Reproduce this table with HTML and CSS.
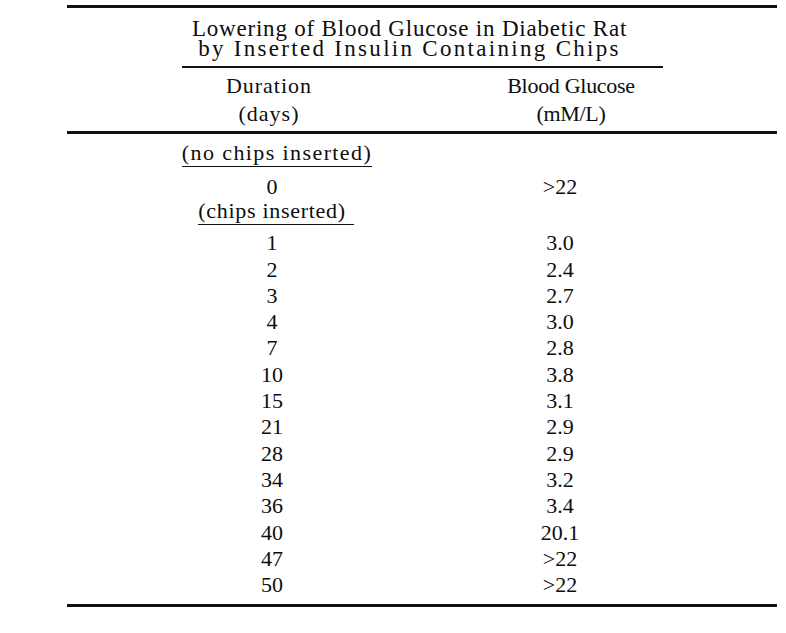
FILE: index.html
```html
<!DOCTYPE html>
<html>
<head>
<meta charset="utf-8">
<link rel="stylesheet" href="styles.css">
</head>
<body>
<div class="table">
  <div class="title">
    <div class="title-line t1">Lowering of Blood Glucose in Diabetic Rat</div>
    <div class="title-line t2">by Inserted Insulin Containing Chips</div>
  </div>
  <div class="head">
    <div class="hcell h1"><div>Duration</div><div>(days)</div></div>
    <div class="hcell h2"><div>Blood Glucose</div><div>(mM/L)</div></div>
  </div>
  <div class="body">
    <div class="label first"><span class="ul ul-a">(no chips inserted)</span></div>
    <div class="row"><span class="c1">0</span><span class="c2">&gt;22</span></div>
    <div class="label second"><span class="ul ul-b">(chips inserted)</span></div>
    <div class="rows">
      <div class="row"><span class="c1">1</span><span class="c2">3.0</span></div>
      <div class="row"><span class="c1">2</span><span class="c2">2.4</span></div>
      <div class="row"><span class="c1">3</span><span class="c2">2.7</span></div>
      <div class="row"><span class="c1">4</span><span class="c2">3.0</span></div>
      <div class="row"><span class="c1">7</span><span class="c2">2.8</span></div>
      <div class="row"><span class="c1">10</span><span class="c2">3.8</span></div>
      <div class="row"><span class="c1">15</span><span class="c2">3.1</span></div>
      <div class="row"><span class="c1">21</span><span class="c2">2.9</span></div>
      <div class="row"><span class="c1">28</span><span class="c2">2.9</span></div>
      <div class="row"><span class="c1">34</span><span class="c2">3.2</span></div>
      <div class="row"><span class="c1">36</span><span class="c2">3.4</span></div>
      <div class="row"><span class="c1">40</span><span class="c2">20.1</span></div>
      <div class="row"><span class="c1">47</span><span class="c2">&gt;22</span></div>
      <div class="row"><span class="c1">50</span><span class="c2">&gt;22</span></div>
    </div>
  </div>
</div>
</body>
</html>
```
FILE: styles.css
```css
html, body {
  margin: 0;
  padding: 0;
  background: #ffffff;
}
body {
  font-family: "Liberation Serif", "Times New Roman", serif;
  color: #0d0d0d;
  font-size: 22px;
}
.table {
  margin-left: 67px;
  margin-top: 5px;
  width: 710px;
  border-top: 3px solid #111;
}
.title {
  margin-left: 115px;
  width: 481px;
  box-sizing: border-box;
  padding: 10.6px 26px 7.4px 0;
  border-bottom: 2px solid #111;
  text-align: center;
  font-size: 23px;
  line-height: 20px;
}
.t1 {
  letter-spacing: 0.8px;
}
.t2 {
  letter-spacing: 2.3px;
}
.head {
  display: grid;
  grid-template-columns: 410px 188px;
  margin-top: 3.6px;
  padding-bottom: 3.4px;
  border-bottom: 3px solid #111;
  line-height: 28px;
}
.hcell {
  text-align: center;
}
.h1 {
  letter-spacing: 1px;
  padding-right: 6px;
}
.h2 {
  letter-spacing: -0.3px;
}
.body {
  padding-bottom: 6px;
  border-bottom: 3px solid #111;
}
.label {
  width: 410px;
  box-sizing: border-box;
  text-align: center;
  line-height: 22px;
}
.label.first {
  margin-top: 7.6px;
  padding-left: 10px;
}
.label.second {
  padding-left: 8px;
}
.ul {
  display: inline-block;
  padding-bottom: 2px;
  border-bottom: 1.5px solid #111;
}
.ul-a {
  letter-spacing: 1.4px;
}
.ul-b {
  letter-spacing: 0.7px;
  padding-right: 8px;
}
.row {
  display: grid;
  grid-template-columns: 410px 166px;
  line-height: 26.3px;
  text-align: center;
}
.body > .row {
  margin-top: 7.4px;
}
.rows {
  margin-top: 5px;
}
```
